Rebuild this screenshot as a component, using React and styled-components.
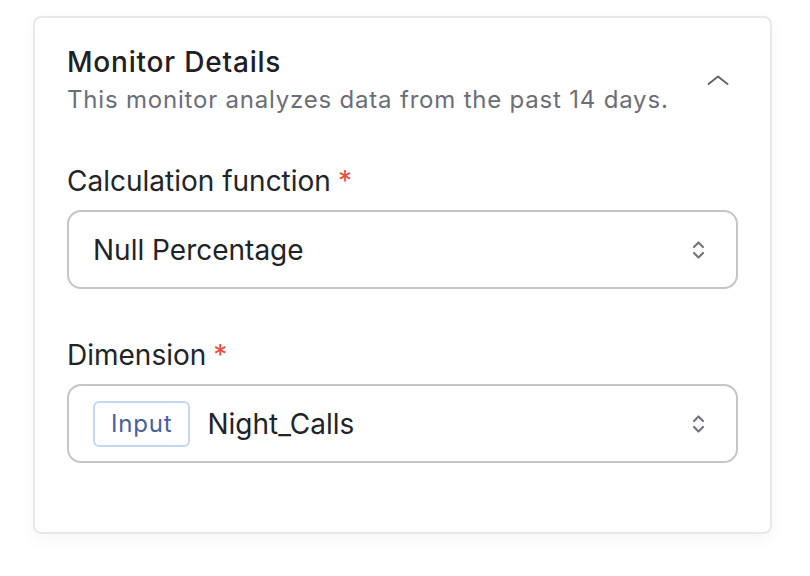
import styled, { createGlobalStyle } from "styled-components";

const Global = createGlobalStyle`
  body {
    margin: 0;
    background: #ffffff;
    font-family: "Inter", "Noto Sans", sans-serif;
  }
`;

const Page = styled.div`
  width: 810px;
  height: 576px;
  padding: 16px 38px 0 33px;
  box-sizing: border-box;
  overflow: hidden;
`;

const Card = styled.section`
  border: 2px solid #e8e8ec;
  border-radius: 8px;
  background: #fff;
  box-shadow: 0 6px 18px rgba(20, 20, 40, 0.04);
  padding: 27px 32px 69px 32px;
  display: flex;
  flex-direction: column;
`;

const Header = styled.div`
  display: flex;
  align-items: center;
  justify-content: space-between;
  margin-bottom: 49px;
`;

const Title = styled.h2`
  margin: 0;
  font-size: 28px;
  font-weight: 500;
  color: #1f2023;
  letter-spacing: 0.8px;
  line-height: 34px;
`;

const Subtitle = styled.p`
  margin: 6px 0 0;
  font-size: 24px;
  color: #6b6e76;
  letter-spacing: 0.8px;
  line-height: 30px;
`;

const Toggle = styled.button`
  border: none;
  background: none;
  padding: 0;
  margin-right: 9px;
  display: flex;
  color: #5d6068;
`;

const Field = styled.div`
  display: flex;
  flex-direction: column;
  gap: 12px;
  margin-bottom: ${(p) => p.gap || 0}px;
`;

const Label = styled.label`
  font-size: 28px;
  color: #232428;
  line-height: 34px;
  display: flex;
  gap: 7px;
`;

const Required = styled.span`
  color: #e8503f;
`;

const Select = styled.div`
  height: 79px;
  box-sizing: border-box;
  border: 2px solid #c4c4ca;
  border-radius: 14px;
  display: flex;
  align-items: center;
  padding: 0 31px 0 24px;
  gap: 17px;
`;

const Value = styled.span`
  flex: 1;
  font-size: 28px;
  color: #222328;
`;

const Badge = styled.span`
  border: 2px solid #c3d6f2;
  border-radius: 6px;
  color: #47609c;
  font-size: 24px;
  letter-spacing: 0.8px;
  padding: 0 16px;
  height: 46px;
  display: flex;
  align-items: center;
  box-sizing: border-box;
`;

const UpDown = () => (
  <svg width="13" height="20" viewBox="0 0 13 20" fill="none" stroke="#73767e" strokeWidth="2.2" strokeLinecap="round" strokeLinejoin="round">
    <path d="M2 7 L6.5 2.5 L11 7" />
    <path d="M2 13 L6.5 17.5 L11 13" />
  </svg>
);

export default function App() {
  return (
    <Page>
      <Global />
      <Card>
        <Header>
          <div>
            <Title>Monitor Details</Title>
            <Subtitle>This monitor analyzes data from the past 14 days.</Subtitle>
          </div>
          <Toggle aria-label="Collapse">
            <svg width="22" height="10" viewBox="0 0 22 10" fill="none" stroke="currentColor" strokeWidth="1.8" strokeLinecap="round" strokeLinejoin="round">
              <path d="M1.5 9 L11 1.5 L20.5 9" />
            </svg>
          </Toggle>
        </Header>
        <Field gap={49}>
          <Label>
            Calculation function <Required>*</Required>
          </Label>
          <Select>
            <Value>Null Percentage</Value>
            <UpDown />
          </Select>
        </Field>
        <Field>
          <Label>
            Dimension <Required>*</Required>
          </Label>
          <Select>
            <Badge>Input</Badge>
            <Value>Night_Calls</Value>
            <UpDown />
          </Select>
        </Field>
      </Card>
    </Page>
  );
}
